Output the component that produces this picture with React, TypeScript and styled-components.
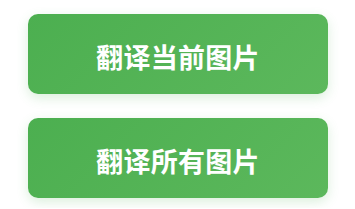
import React from 'react'
import styled, { createGlobalStyle } from 'styled-components'

const GlobalStyle = createGlobalStyle`
  html, body {
    margin: 0;
    padding: 0;
    background: #fff;
  }
  body {
    font-family: "Noto Sans", "Noto Sans CJK SC", sans-serif;
  }
`

const Panel = styled.div`
  display: flex;
  flex-direction: column;
  gap: 24px;
  padding: 14px 27px 10px 28px;
`

const ActionButton = styled.button`
  width: 300px;
  height: 80px;
  border: none;
  border-radius: 10px;
  background: linear-gradient(135deg, #4caf50 0%, #5cb85c 100%);
  box-shadow: 0 4px 12px rgba(76, 175, 80, 0.2);
  color: #fff;
  font-family: "Noto Sans CJK SC", sans-serif;
  font-size: 27px;
  font-weight: 700;
  letter-spacing: 0.3px;
  cursor: pointer;
  display: flex;
  align-items: center;
  justify-content: center;
  padding: 4px 0 0 0;
`

const App = (): JSX.Element => {
  return (
    <>
      <GlobalStyle />
      <Panel>
        <ActionButton>翻译当前图片</ActionButton>
        <ActionButton>翻译所有图片</ActionButton>
      </Panel>
    </>
  )
}

export default App
